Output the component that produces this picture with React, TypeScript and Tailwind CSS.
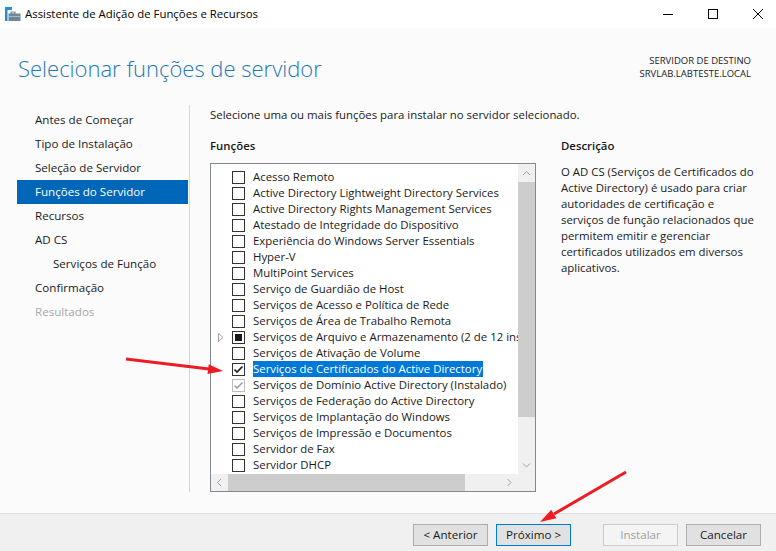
import React from 'react';

type RoleState = 'none' | 'checked' | 'partial' | 'disabled';

interface Role {
  label: string;
  state?: RoleState;
  expand?: boolean;
  selected?: boolean;
}

const ROLES: Role[] = [
  { label: 'Acesso Remoto' },
  { label: 'Active Directory Lightweight Directory Services' },
  { label: 'Active Directory Rights Management Services' },
  { label: 'Atestado de Integridade do Dispositivo' },
  { label: 'Experiência do Windows Server Essentials' },
  { label: 'Hyper-V' },
  { label: 'MultiPoint Services' },
  { label: 'Serviço de Guardião de Host' },
  { label: 'Serviços de Acesso e Política de Rede' },
  { label: 'Serviços de Área de Trabalho Remota' },
  { label: 'Serviços de Arquivo e Armazenamento (2 de 12 instalado(s))', state: 'partial', expand: true },
  { label: 'Serviços de Ativação de Volume' },
  { label: 'Serviços de Certificados do Active Directory', state: 'checked', selected: true },
  { label: 'Serviços de Domínio Active Directory (Instalado)', state: 'disabled' },
  { label: 'Serviços de Federação do Active Directory' },
  { label: 'Serviços de Implantação do Windows' },
  { label: 'Serviços de Impressão e Documentos' },
  { label: 'Servidor de Fax' },
  { label: 'Servidor DHCP' },
];

const STEPS = [
  { label: 'Antes de Começar' },
  { label: 'Tipo de Instalação' },
  { label: 'Seleção de Servidor' },
  { label: 'Funções do Servidor', active: true },
  { label: 'Recursos' },
  { label: 'AD CS' },
  { label: 'Serviços de Função', indent: true },
  { label: 'Confirmação' },
  { label: 'Resultados', disabled: true },
];

const DESCRIPTION = [
  'O AD CS (Serviços de Certificados do',
  'Active Directory) é usado para criar',
  'autoridades de certificação e',
  'serviços de função relacionados que',
  'permitem emitir e gerenciar',
  'certificados utilizados em diversos',
  'aplicativos.',
];

function AppIcon() {
  return (
    <svg width="16" height="14" viewBox="0 0 16 14" aria-hidden="true">
      <rect x="0" y="0" width="7" height="3" fill="#1e8be0" />
      <rect x="0" y="0" width="2.5" height="14" fill="#1e8be0" />
      <rect x="6" y="5" width="4" height="2" fill="none" stroke="#6e8497" strokeWidth="1" />
      <rect x="3.5" y="6.5" width="12" height="7.5" fill="#6e8497" />
      <rect x="3.5" y="9" width="12" height="1" fill="#a9b8c5" />
    </svg>
  );
}

function TitleBar() {
  return (
    <div className="h-[28px] bg-white flex items-center shrink-0">
      <div className="pl-[5px] pr-[4px] flex items-center">
        <AppIcon />
      </div>
      <span className="text-[11.4px] text-black leading-none">Assistente de Adição de Funções e Recursos</span>
      <div className="ml-auto flex h-full mr-[-4px]">
        <div className="w-[45px] h-full flex items-center justify-center">
          <svg width="10" height="10" viewBox="0 0 10 10"><path d="M0 5.5h10" stroke="#000" strokeWidth="1" /></svg>
        </div>
        <div className="w-[45px] h-full flex items-center justify-center">
          <svg width="10" height="10" viewBox="0 0 10 10"><rect x="0.5" y="0.5" width="9" height="9" fill="none" stroke="#000" strokeWidth="1" /></svg>
        </div>
        <div className="w-[45px] h-full flex items-center justify-center">
          <svg width="10" height="10" viewBox="0 0 10 10"><path d="M0 0L10 10M10 0L0 10" stroke="#000" strokeWidth="1" /></svg>
        </div>
      </div>
    </div>
  );
}

function Checkbox({ state = 'none' }: { state?: RoleState }) {
  const disabled = state === 'disabled';
  return (
    <div
      className={`w-[13px] h-[13px] border bg-white flex items-center justify-center shrink-0 ${
        disabled ? 'border-[#bcbcbc]' : 'border-[#333333]'
      }`}
    >
      {state === 'partial' && <div className="w-[7px] h-[7px] bg-[#1a1a1a]" />}
      {(state === 'checked' || disabled) && (
        <svg width="11" height="11" viewBox="0 0 11 11">
          <path d="M1.5 5.5L4 8L9.5 2.5" fill="none" stroke={disabled ? '#a3a3a3' : '#1a1a1a'} strokeWidth="1.6" />
        </svg>
      )}
    </div>
  );
}

function Chevron({ dir }: { dir: 'up' | 'down' | 'left' | 'right' }) {
  const paths = {
    up: 'M1 5L4.5 1.5L8 5',
    down: 'M1 1.5L4.5 5L8 1.5',
    left: 'M5 1L1.5 4.5L5 8',
    right: 'M1.5 1L5 4.5L1.5 8',
  };
  const vertical = dir === 'up' || dir === 'down';
  return (
    <svg width={vertical ? 9 : 7} height={vertical ? 7 : 9} viewBox={vertical ? '0 0 9 7' : '0 0 7 9'}>
      <path d={paths[dir]} fill="none" stroke="#a0a0a0" strokeWidth="1" />
    </svg>
  );
}

function RoleList() {
  return (
    <div className="h-[329px] border border-[#828790] bg-white flex flex-col">
      <div className="flex flex-1 min-h-0">
        <div className="flex-1 min-w-0 overflow-hidden pt-[5px]">
          {ROLES.map(r => (
            <div key={r.label} className="h-4 flex items-center pl-[7px] whitespace-nowrap">
              <div className="w-[14px] h-4 flex items-center shrink-0">
                {r.expand && (
                  <svg width="6" height="9" viewBox="0 0 6 9">
                    <path d="M0.5 0.5L5 4.5L0.5 8.5Z" fill="none" stroke="#a6a6a6" strokeWidth="1" />
                  </svg>
                )}
              </div>
              <Checkbox state={r.state} />
              <span
                className={`ml-[8px] shrink-0 text-[11.4px] leading-4 ${
                  r.selected ? 'bg-[#0078d7] text-white pr-[1px]' : 'text-[#1a1a1a]'
                }`}
              >
                {r.label}
              </span>
            </div>
          ))}
        </div>
        {/* vertical scrollbar */}
        <div className="w-[17px] shrink-0 bg-[#f0f0f0] flex flex-col">
          <div className="h-[18px] flex items-center justify-center"><Chevron dir="up" /></div>
          <div className="h-[235px] bg-[#cdcdcd]" />
          <div className="flex-1" />
          <div className="h-[17px] flex items-center justify-center"><Chevron dir="down" /></div>
        </div>
      </div>
      {/* horizontal scrollbar */}
      <div className="h-[17px] flex bg-[#f0f0f0]">
        <div className="w-[17px] flex items-center justify-center"><Chevron dir="left" /></div>
        <div className="w-[237px] bg-[#cdcdcd]" />
        <div className="flex-1" />
        <div className="w-[17px] flex items-center justify-center"><Chevron dir="right" /></div>
        <div className="w-[17px]" />
      </div>
    </div>
  );
}

function Button({ children, primary, disabled }: { children: React.ReactNode; primary?: boolean; disabled?: boolean }) {
  return (
    <div
      className={`w-[75px] h-[22px] border flex items-center justify-center text-[11.6px] ${
        disabled
          ? 'border-[#cccccc] bg-[#f4f4f4] text-[#a0a0a0]'
          : primary
          ? 'border-[#0078d7] bg-[#e1e1e1] text-[#1a1a1a]'
          : 'border-[#adadad] bg-[#e1e1e1] text-[#1a1a1a]'
      }`}
    >
      {children}
    </div>
  );
}

function Arrows() {
  return (
    <svg className="absolute inset-0 pointer-events-none" width="776" height="551" viewBox="0 0 776 551">
      <line x1="126" y1="359" x2="209" y2="369" stroke="#ed1c24" strokeWidth="3" />
      <polygon points="223,371 208.7,364.2 207.5,374.1" fill="#ed1c24" />
      <line x1="626" y1="472" x2="554" y2="514" stroke="#ed1c24" strokeWidth="3" />
      <polygon points="540,522 556.3,518.3 551.3,509.7" fill="#ed1c24" />
    </svg>
  );
}

export default function App() {
  return (
    <div className="relative w-[776px] h-[551px] overflow-hidden bg-[#fbfbfb] text-[#1a1a1a] font-['Open_Sans',sans-serif] flex flex-col">
      <TitleBar />

      {/* Header */}
      <header className="h-[77px] shrink-0 flex justify-between items-start pl-[18px] pr-[25px]">
        <h1 className="mt-[26px] text-[22px] font-light text-[#1f78b8] leading-[28px]">Selecionar funções de servidor</h1>
        <div className="mt-[26px] text-[9.5px] leading-[13px] text-right text-[#222]">
          SERVIDOR DE DESTINO
          <br />
          SRVLAB.LABTESTE.LOCAL
        </div>
      </header>

      {/* Body */}
      <div className="flex h-[387px] shrink-0">
        <nav className="w-[190px] border-r border-[#d6d6d6] pl-[17px] pr-[1px] pt-[3px]">
          {STEPS.map(s => (
            <div
              key={s.label}
              className={`h-6 flex items-center text-[11.6px] ${s.indent ? 'pl-[36px]' : 'pl-[18px]'} ${
                s.active ? 'bg-[#0067b8] text-white' : s.disabled ? 'text-[#a8a8a8]' : 'text-[#1a1a1a]'
              }`}
            >
              {s.label}
            </div>
          ))}
        </nav>

        <main className="flex-1 pl-[20px] pt-[2px]">
          <p className="text-[11.4px] leading-4 h-4">Selecione uma ou mais funções para instalar no servidor selecionado.</p>
          <div className="flex mt-[15px]">
            <div className="w-[326px]">
              <div className="text-[11.4px] leading-4 font-semibold">Funções</div>
              <div className="mt-[9px]">
                <RoleList />
              </div>
            </div>
            <div className="ml-[25px]">
              <div className="text-[11.4px] leading-4 font-semibold">Descrição</div>
              <div className="mt-[10px] text-[11.4px] leading-4 whitespace-nowrap">
                {DESCRIPTION.map(l => (
                  <div key={l}>{l}</div>
                ))}
              </div>
            </div>
          </div>
        </main>
      </div>

      <div className="flex-1" />

      {/* Footer */}
      <footer className="h-[38px] shrink-0 border-t border-[#dfdfdf] bg-[#f0f0f0] flex items-start justify-end pt-[10px] pr-[15px]">
        <Button>&lt; Anterior</Button>
        <div className="w-2" />
        <Button primary>Próximo &gt;</Button>
        <div className="w-8" />
        <Button disabled>Instalar</Button>
        <div className="w-2" />
        <Button>Cancelar</Button>
      </footer>

      <Arrows />
    </div>
  );
}
